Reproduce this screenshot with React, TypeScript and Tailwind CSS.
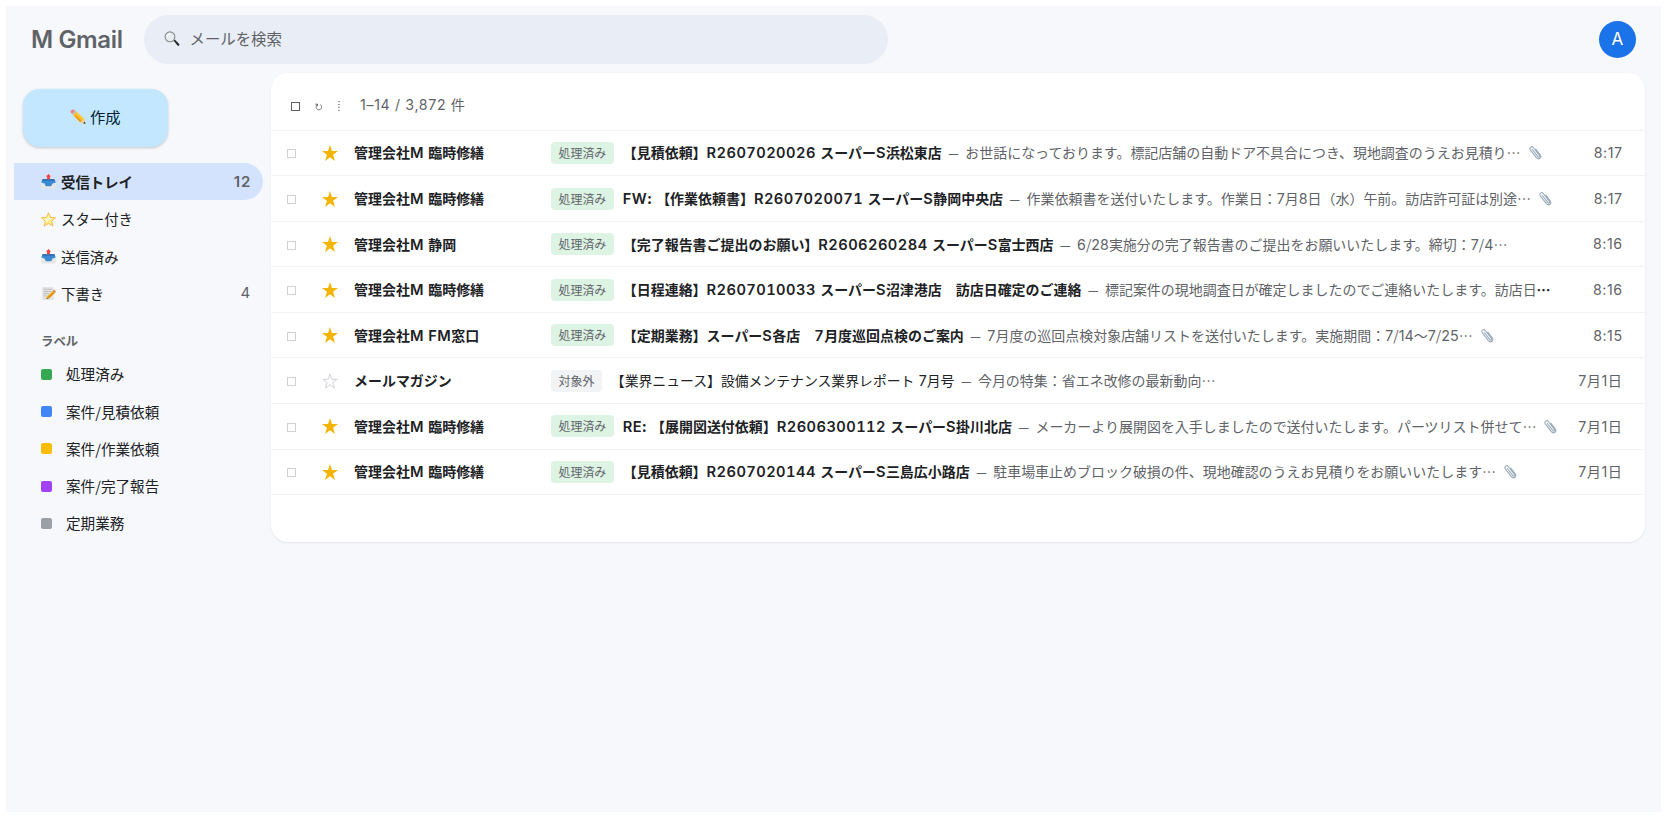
import { Fragment, type ReactNode } from "react";
import clsx from "clsx";

type Mail = {
  starred: boolean;
  sender: string;
  tag: string;
  subject: string;
  snippet: string;
  clipped?: boolean;
  attachment?: boolean;
  time: string;
};

const mails: Mail[] = [
  {
    starred: true,
    sender: "管理会社M 臨時修繕",
    tag: "処理済み",
    subject: "【見積依頼】R2607020026 スーパーS浜松東店",
    snippet: "お世話になっております。標記店舗の自動ドア不具合につき、現地調査のうえお見積り…",
    attachment: true,
    time: "8:17",
  },
  {
    starred: true,
    sender: "管理会社M 臨時修繕",
    tag: "処理済み",
    subject: "FW: 【作業依頼書】R2607020071 スーパーS静岡中央店",
    snippet: "作業依頼書を送付いたします。作業日：7月8日（水）午前。訪店許可証は別途…",
    attachment: true,
    time: "8:17",
  },
  {
    starred: true,
    sender: "管理会社M 静岡",
    tag: "処理済み",
    subject: "【完了報告書ご提出のお願い】R2606260284 スーパーS富士西店",
    snippet: "6/28実施分の完了報告書のご提出をお願いいたします。締切：7/4…",
    time: "8:16",
  },
  {
    starred: true,
    sender: "管理会社M 臨時修繕",
    tag: "処理済み",
    subject: "【日程連絡】R2607010033 スーパーS沼津港店　訪店日確定のご連絡",
    snippet: "標記案件の現地調査日が確定しましたのでご連絡いたします。訪店日",
    clipped: true,
    time: "8:16",
  },
  {
    starred: true,
    sender: "管理会社M FM窓口",
    tag: "処理済み",
    subject: "【定期業務】スーパーS各店　7月度巡回点検のご案内",
    snippet: "7月度の巡回点検対象店舗リストを送付いたします。実施期間：7/14〜7/25…",
    attachment: true,
    time: "8:15",
  },
  {
    starred: false,
    sender: "メールマガジン",
    tag: "対象外",
    subject: "【業界ニュース】設備メンテナンス業界レポート 7月号",
    snippet: "今月の特集：省エネ改修の最新動向…",
    time: "7月1日",
  },
  {
    starred: true,
    sender: "管理会社M 臨時修繕",
    tag: "処理済み",
    subject: "RE: 【展開図送付依頼】R2606300112 スーパーS掛川北店",
    snippet: "メーカーより展開図を入手しましたので送付いたします。パーツリスト併せて…",
    attachment: true,
    time: "7月1日",
  },
  {
    starred: true,
    sender: "管理会社M 臨時修繕",
    tag: "処理済み",
    subject: "【見積依頼】R2607020144 スーパーS三島広小路店",
    snippet: "駐車場車止めブロック破損の件、現地確認のうえお見積りをお願いいたします…",
    attachment: true,
    time: "7月1日",
  },
];

const labels = [
  { name: "処理済み", color: "bg-[#34a853]" },
  { name: "案件/見積依頼", color: "bg-[#4285f4]" },
  { name: "案件/作業依頼", color: "bg-[#fbbc04]" },
  { name: "案件/完了報告", color: "bg-[#a142f4]" },
  { name: "定期業務", color: "bg-[#9aa0a6]" },
];

// Latin runs get Inter with some tracking, everything else stays in the CJK face
function Mixed({ text, bold }: { text: string; bold?: boolean }) {
  return (
    <>
      {text.split(/([A-Z0-9]+)/).map((part, i) =>
        i % 2 ? (
          <span
            key={i}
            className={clsx(
              "font-['Inter'] leading-none",
              bold ? "text-[1.05em] font-semibold tracking-[0.03em] tabular-nums" : "text-[1.02em]"
            )}
          >
            {part}
          </span>
        ) : (
          <Fragment key={i}>{part}</Fragment>
        )
      )}
    </>
  );
}

function SearchIcon() {
  return (
    <svg viewBox="0 0 16 16" className="size-4">
      <path d="M9.6 9.8l1.2-1.2 4.4 4.3c.9 1-.7 2.6-1.7 1.7z" fill="#26282b" />
      <circle cx="6" cy="5.8" r="4.9" fill="#e6edf1" stroke="#85898e" strokeWidth="1.1" />
      <path d="M3.4 5.2a3 3 0 0 1 2.4-2.3" fill="none" stroke="#fff" strokeWidth="1.1" />
    </svg>
  );
}

function PencilIcon() {
  return (
    <svg viewBox="0 0 16 16" className="size-4">
      <path d="M2.8 5.8L6.2 2.3l7.9 7.4 1.4 5.2-5.3-1.6z" fill="#fdc62f" />
      <path d="M4.1 7.1l1.4-1.5 7.4 7-2.7.7z" fill="#eba31c" />
      <path d="M.8 3.7C0 2.1 2 0 3.7.6l1.4 1.2L2.2 5z" fill="#ee7f84" />
      <path d="M2.2 5l2.9-3.2 1.2 1.1-3.1 3.2z" fill="#b4bac0" />
      <path d="M14.1 9.7l1.4 5.2-5.3-1.6z" fill="#f3cf9b" />
      <path d="M14.8 12.6l.7 2.3-2.4-.7z" fill="#3c3c3c" />
    </svg>
  );
}

function TrayIcon() {
  return (
    <svg viewBox="0 0 15 15" className="size-[15px]">
      <path d="M.4 8.8h14.2v4.8a.9.9 0 0 1-.9.9H1.3a.9.9 0 0 1-.9-.9z" fill="#e6e6e3" />
      <path d="M1.6 5.2h11.8l1.4 3.4-3.3.8-1.3 2.9H4.8L3.5 9.4.2 8.6z" fill="#3a8ad2" />
      <path d="M1.6 5.2h11.8l.5 1.3H1.1z" fill="#2763a5" />
      <path d="M7.5 0l2.7 2.6H9v2.6H6V2.6H4.8z" fill="#f2484b" />
    </svg>
  );
}

function StarEmoji() {
  return (
    <svg viewBox="0 0 15 15" className="size-[15px]">
      <path
        d="M7.5.7l2 4.7 5 .4-3.8 3.3 1.2 5-4.4-2.7-4.4 2.7 1.2-5L.5 5.8l5-.4z"
        fill="#ffea86"
        stroke="#f3b63f"
        strokeWidth=".9"
        strokeLinejoin="round"
      />
      <path d="M7.5 3l1.2 3.3 2.7.3-5.9 3.6-2.4-3.6 3.2-.3z" fill="#fff8c8" />
    </svg>
  );
}

function MemoIcon() {
  return (
    <svg viewBox="0 0 15 15" className="size-[15px]">
      <path d="M1.3 1h11.2v13H1.3z" fill="#e3e3e1" />
      <path d="M2.5 3.3h8.8M2.5 5.5h7.5M2.5 7.7h5M2.5 9.9h3" stroke="#b6b8ba" strokeWidth=".8" />
      <path d="M6.1 10.2l6-5.8 2 2-6 5.8-2.8.8z" fill="#f6b928" />
      <path d="M12.1 4.4l.9-.8 2 1.9-.9.9z" fill="#e8767a" />
      <path d="M6.8 11.2l6.2-5.9 1.1 1.1-6 5.8-2.8.8z" fill="#d98c16" />
      <path d="M5.8 11.7l.9.8-1.4.5z" fill="#333" />
    </svg>
  );
}

function ClipIcon() {
  return (
    <svg viewBox="0 0 14 15" className="h-[15px] w-3.5" fill="none" strokeLinecap="round">
      <path
        d="M4.3 4.5l5.6 7.2c.9 1.1 2.3-.1 1.5-1.2L5.3 2.5C3.7.6.7 2.6 2.3 4.8l6.1 7.9c2.2 2.6 5.8-.1 3.9-2.7L7.8 4.2"
        stroke="#9aabbb"
        strokeWidth="1.1"
      />
    </svg>
  );
}

function Star({ filled }: { filled: boolean }) {
  return (
    <svg viewBox="0 0 16 16" className="size-4">
      <path
        d={
          filled
            ? "M8 0l1.95 5.95H16l-4.95 3.7L12.95 16 8 12.2 3.05 16l1.9-6.35L0 5.95h6.05z"
            : "M8 1l1.7 5.3h5.6l-4.5 3.3 1.7 5.4L8 11.7 3.5 15l1.7-5.4L.7 6.3h5.6z"
        }
        fill={filled ? "#f4b400" : "none"}
        stroke={filled ? "none" : "#d3d5d9"}
        strokeWidth="1"
      />
    </svg>
  );
}

function NavItem({
  icon,
  name,
  count,
  active,
}: {
  icon: ReactNode;
  name: string;
  count?: number;
  active?: boolean;
}) {
  return (
    <div
      className={clsx(
        "flex h-[37.25px] items-center rounded-r-full pr-3 pl-[27px] text-[14.4px]",
        active && "bg-[#d3e3fd] font-bold"
      )}
    >
      {icon}
      <span className="ml-[5px] flex-1">{name}</span>
      {count && (
        <span
          className={clsx(
            "font-['Inter'] text-[15px] tracking-[0.05em] text-[#5f6368]",
            active && "font-semibold"
          )}
        >
          {count}
        </span>
      )}
    </div>
  );
}

function Sidebar() {
  return (
    <aside className="w-[249px] shrink-0 pt-4">
      <button className="ml-[9px] flex h-[58px] w-[144.5px] items-center justify-center gap-1 rounded-[17px] bg-[#c2e7ff] pb-0.5 text-[15.3px] text-[#001d35] shadow-[0_1px_3px_rgba(0,0,0,0.2)]">
        <PencilIcon />
        作成
      </button>
      <nav className="mt-[16.5px]">
        <NavItem icon={<TrayIcon />} name="受信トレイ" count={12} active />
        <NavItem icon={<StarEmoji />} name="スター付き" />
        <NavItem icon={<TrayIcon />} name="送信済み" />
        <NavItem icon={<MemoIcon />} name="下書き" count={4} />
      </nav>
      <p className="mt-[19px] pl-[27px] text-[12.4px] leading-5 font-bold text-[#5f6368]">ラベル</p>
      <ul className="mt-[4.5px]">
        {labels.map((label) => (
          <li key={label.name} className="flex h-[37.25px] items-center pl-[27px] text-[14.6px]">
            <span className={clsx("mr-3.5 size-[11px] rounded-[2px]", label.color)} />
            {label.name}
          </li>
        ))}
      </ul>
    </aside>
  );
}

function MailRow({ mail }: { mail: Mail }) {
  return (
    <div className="flex h-[45.55px] items-center border-b border-[#f1f3f4] pr-[22px] pl-4 text-[13.98px]">
      <span className="mt-0.5 size-[9px] border border-[#cfd1d5]" />
      <span className="ml-[26px]">
        <Star filled={mail.starred} />
      </span>
      <span className="ml-4 w-[196.5px] shrink-0 font-bold [word-spacing:1.2px]">
        <Mixed text={mail.sender} bold />
      </span>
      <span
        className={clsx(
          "flex h-[22px] shrink-0 items-center rounded px-2 text-[11.95px] text-[#5f6368]",
          mail.tag === "対象外" ? "bg-[#f1f3f4]" : "bg-[#ddf3e4]"
        )}
      >
        {mail.tag}
      </span>
      <span className="ml-[8.5px] flex flex-1 items-baseline whitespace-pre [word-spacing:1.2px]">
        <span className={mail.starred ? "font-bold" : "text-[13.85px]"}>
          <Mixed text={mail.subject} bold={mail.starred} />
        </span>
        <span className="flex w-[23.5px] -translate-y-[1.5px] justify-center font-['Liberation_Sans'] text-[9.5px] font-bold text-[#5f6368]">
          —
        </span>
        <span className="text-[#5f6368]">
          <Mixed text={mail.snippet} />
        </span>
        {mail.clipped && <span className="font-bold">…</span>}
        {mail.attachment && (
          <span className="ml-[7px] self-center">
            <ClipIcon />
          </span>
        )}
      </span>
      <span className="font-['Inter','Noto_Sans_CJK_JP'] text-[14.2px] tracking-[0.035em] whitespace-nowrap text-[#5f6368]">
        {mail.time}
      </span>
    </div>
  );
}

function Toolbar() {
  return (
    <div className="flex h-[58px] items-center border-b border-[#f1f3f4] pt-2 pl-5 text-[#5f6368]">
      <span className="mt-0.5 size-[9px] border border-[#5f6368]" />
      <svg viewBox="0 0 8 8" className="mt-[3px] ml-[15px] size-2" fill="none" stroke="#5f6368">
        <path d="M.3 1.2h2.2v2M2.3 1.4C.4 2.9.9 6.8 3.8 6.8S7.4 3 5.4 1.5" strokeWidth=".9" />
      </svg>
      <svg viewBox="0 0 2 10" className="mt-px ml-[15px] h-2.5 w-0.5" fill="#5f6368">
        <path d="M.4 0h1.2v1.2H.4zM.4 2.9h1.2v1.2H.4zM.4 5.8h1.2V7H.4zM.4 8.7h1.2v1.2H.4z" />
      </svg>
      <span className="ml-5 pb-[1.5px] font-['Inter','Noto_Sans_CJK_JP'] text-[14.2px] tracking-[0.045em]">
        1–14 / 3,872 件
      </span>
    </div>
  );
}

export default function App() {
  return (
    <div lang="ja" className="h-[818px] bg-white p-1.5 font-['Noto_Sans_CJK_JP',sans-serif] text-[#202124]">
      <div className="flex h-[805.5px] flex-col bg-[#f6f8fc]">
        <header className="flex h-[66.7px] shrink-0 items-center pr-[25px] pl-[25px]">
          <h1 className="w-[112.5px] pt-0.5 font-['Inter'] text-[24px] font-semibold tracking-[-0.015em] whitespace-nowrap text-[#5f6368]">
            M Gmail
          </h1>
          <div className="flex h-[49.5px] w-[744px] items-center gap-2.5 rounded-full bg-[#e9eef6] pl-5 text-[15.4px] text-[#5f6368]">
            <SearchIcon />
            <span className="pb-[1.5px]">メールを検索</span>
          </div>
          <div className="ml-auto flex size-[37.5px] items-center justify-center rounded-full bg-[#1a73e8] font-['Inter'] text-[17px] text-white">
            A
          </div>
        </header>
        <div className="flex items-start pr-[16.5px] pl-2">
          <Sidebar />
          <main className="ml-2 h-[469px] flex-1 rounded-[17px] bg-white shadow-[0_1px_2px_rgba(60,64,67,0.1)]">
            <Toolbar />
            {mails.map((mail) => (
              <MailRow key={mail.subject} mail={mail} />
            ))}
          </main>
        </div>
      </div>
    </div>
  );
}
